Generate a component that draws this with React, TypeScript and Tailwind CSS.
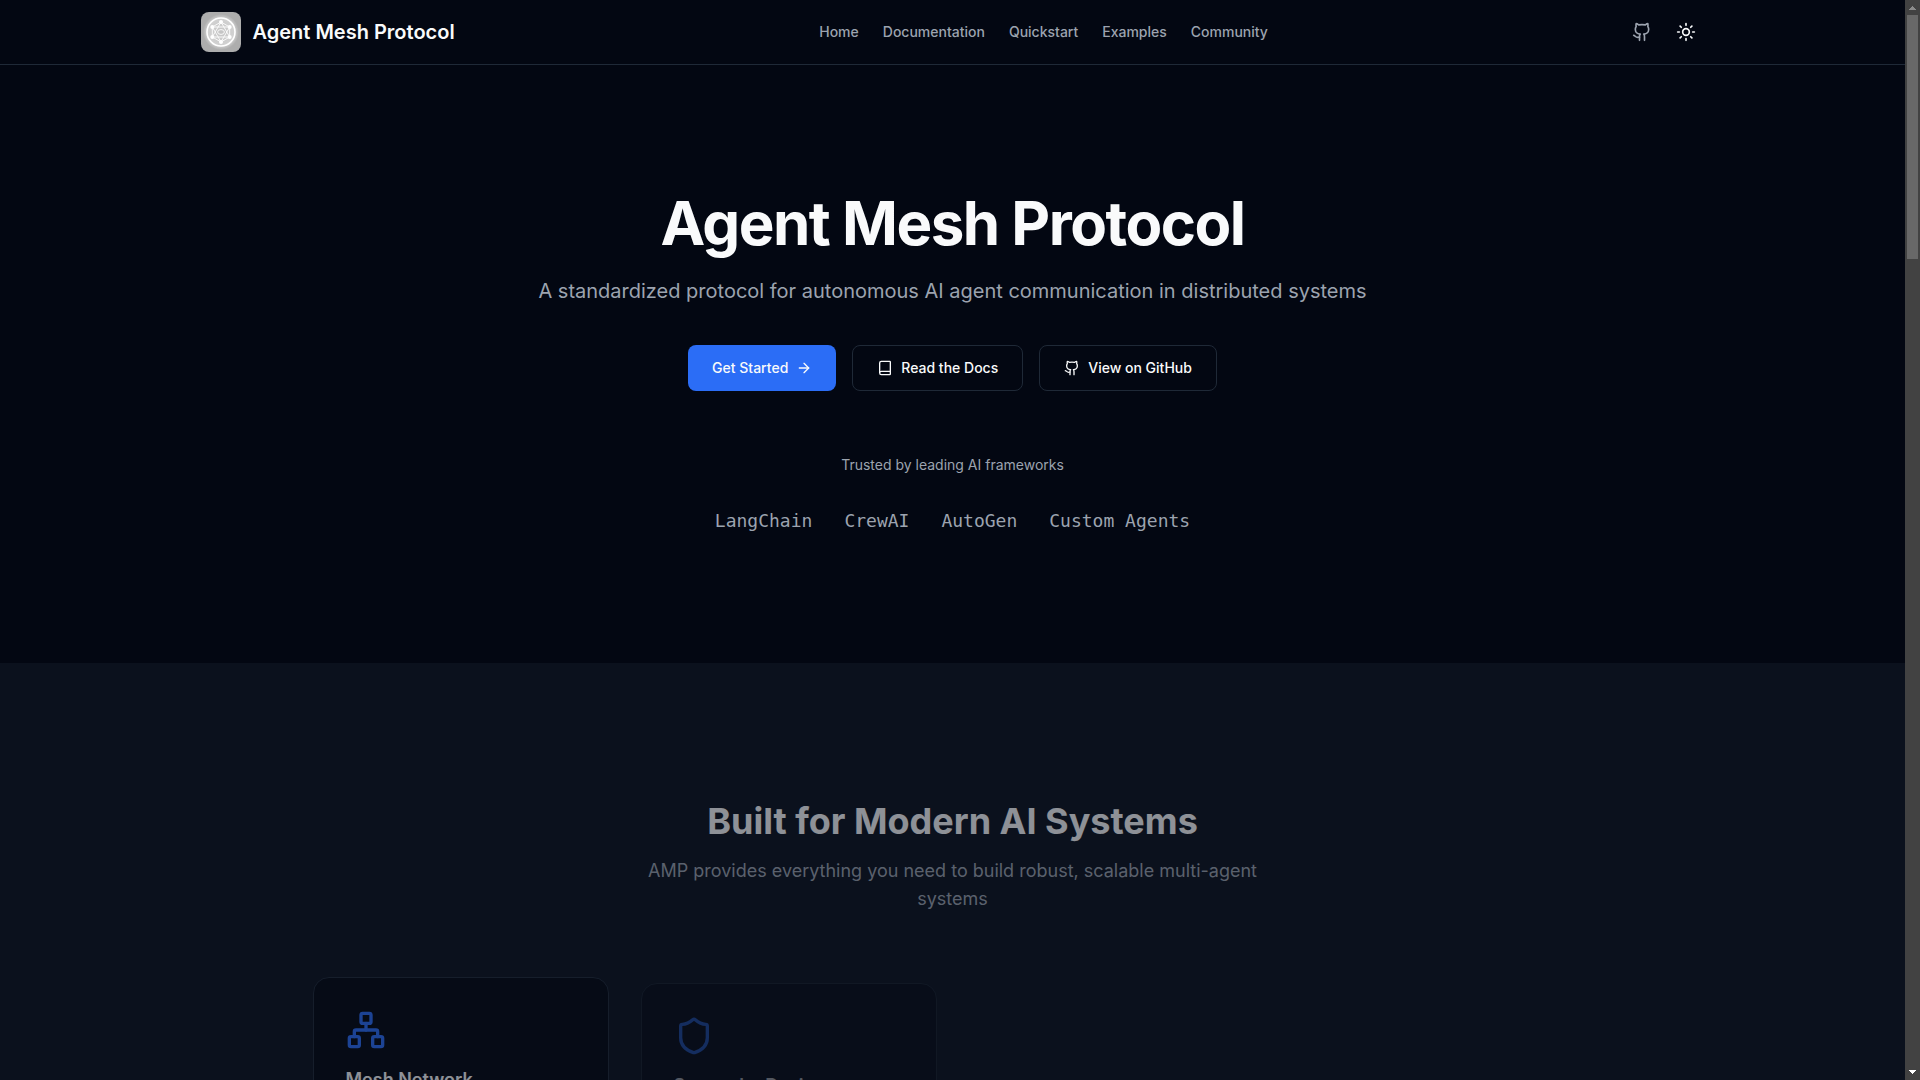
import { ArrowRight, Book, Github, Network, Shield, Sun } from "lucide-react";

const navLinks = ["Home", "Documentation", "Quickstart", "Examples", "Community"];

const frameworks = ["LangChain", "CrewAI", "AutoGen", "Custom Agents"];

const features = [
  {
    title: "Mesh Network",
    icon: Network,
    text: "Decentralized agent-to-agent communication with automatic routing",
    reveal: "translate-y-2.5 opacity-55",
  },
  {
    title: "Secure by Design",
    icon: Shield,
    text: "Built-in authentication and end-to-end encryption",
    reveal: "translate-y-4 opacity-30",
  },
];

const Logo = () => (
  <svg viewBox="0 0 40 40" className="h-10 w-10 rounded-lg" aria-hidden="true">
    <defs>
      <radialGradient id="glow">
        <stop offset="0%" stopColor="#c4c4c4" />
        <stop offset="75%" stopColor="#d2d2d2" />
        <stop offset="100%" stopColor="#adadad" />
      </radialGradient>
    </defs>
    <rect width="40" height="40" fill="#adadad" />
    <circle cx="20" cy="20" r="18" fill="url(#glow)" />
    <circle cx="20" cy="20" r="14" fill="none" stroke="#fff" strokeWidth="1.6" />
    <g fill="none" stroke="#fafafa" strokeWidth="1">
      <path d="M20 10 28.7 15 28.7 25 20 30 11.3 25 11.3 15Z" />
      <path d="M20 10 28.7 25 11.3 25Z" />
      <path d="M20 30 28.7 15 11.3 15Z" />
      <ellipse cx="20" cy="20" rx="3.4" ry="2.4" />
    </g>
    <g fill="#fff">
      <circle cx="20" cy="10" r="2" />
      <circle cx="28.7" cy="15" r="2" />
      <circle cx="28.7" cy="25" r="2" />
      <circle cx="20" cy="30" r="2" />
      <circle cx="11.3" cy="25" r="2" />
      <circle cx="11.3" cy="15" r="2" />
    </g>
  </svg>
);

const Header = () => (
  <header className="border-b border-[#1f2937]">
    <div className="mx-auto flex h-16 max-w-screen-2xl items-center justify-between px-4">
      <a href="#" className="flex items-center gap-3">
        <Logo />
        <span className="text-xl font-semibold">Agent Mesh Protocol</span>
      </a>
      <nav className="flex items-center gap-6 text-sm font-medium text-[#9ca3af]">
        {navLinks.map((link) => (
          <a key={link} href="#">
            {link}
          </a>
        ))}
      </nav>
      <div className="flex items-center gap-4">
        <a href="#" aria-label="GitHub" className="text-[#9ca3af]">
          <Github className="h-5 w-5" />
        </a>
        <button type="button" aria-label="Toggle theme" className="rounded-md p-2">
          <Sun className="h-5 w-5" />
        </button>
      </div>
    </div>
  </header>
);

const Hero = () => (
  <section className="flex flex-col items-center px-4 py-32 text-center">
    <h1 className="text-6xl font-bold tracking-tight">Agent Mesh Protocol</h1>
    <p className="mt-6 text-xl text-[#9ca3af]">
      A standardized protocol for autonomous AI agent communication in distributed systems
    </p>
    <div className="mt-10 flex flex-wrap justify-center gap-4 text-sm font-medium">
      <a href="#" className="flex items-center gap-2 rounded-lg bg-[#2b6df6] px-6 py-3">
        Get Started
        <ArrowRight className="h-4 w-4" />
      </a>
      <a href="#" className="flex items-center gap-2 rounded-lg border border-[#1f2937] px-6 py-3">
        <Book className="h-4 w-4" />
        Read the Docs
      </a>
      <a href="#" className="flex items-center gap-2 rounded-lg border border-[#1f2937] px-6 py-3">
        <Github className="h-4 w-4" />
        View on GitHub
      </a>
    </div>
    <p className="mt-16 text-sm text-[#9ca3af]">Trusted by leading AI frameworks</p>
    <div className="mt-8 flex flex-wrap justify-center gap-8 font-['DejaVu_Sans_Mono',monospace] text-lg text-[#9ca3af]">
      {frameworks.map((name) => (
        <span key={name}>{name}</span>
      ))}
    </div>
  </section>
);

const Features = () => (
  <section className="bg-[#0b111d] px-4 py-32">
    <div className="mx-auto max-w-7xl">
      <div className="mx-auto max-w-2xl translate-y-2.5 text-center opacity-55">
        <h2 className="text-4xl font-bold">Built for Modern AI Systems</h2>
        <p className="mt-4 text-lg text-[#9ca3af]">
          AMP provides everything you need to build robust, scalable multi-agent systems
        </p>
      </div>
      <div className="mt-16 grid grid-cols-4 gap-8">
        {features.map(({ title, icon: Icon, text, reveal }) => (
          <div
            key={title}
            className={`rounded-2xl border border-[#1f2937] bg-[#030712] p-8 ${reveal}`}
          >
            <Icon className="h-10 w-10 text-[#2b6df6]" />
            <h3 className="mt-4 text-lg font-semibold">{title}</h3>
            <p className="mt-2 text-sm text-[#9ca3af]">{text}</p>
          </div>
        ))}
      </div>
    </div>
  </section>
);

const Scrollbar = () => (
  <div className="flex w-[15px] shrink-0 flex-col items-center bg-[#424242]" aria-hidden="true">
    <svg viewBox="0 0 15 15" className="h-[15px] w-[15px]" shapeRendering="crispEdges">
      <path d="M4 10h7L7.5 6Z" fill="#8b8b8b" />
    </svg>
    <div className="h-[244px] w-[11px] bg-[#686868]" />
    <svg viewBox="0 0 15 15" className="mt-auto h-[15px] w-[15px]" shapeRendering="crispEdges">
      <path d="M4 5h7L7.5 9Z" fill="#fff" />
    </svg>
  </div>
);

export default function App() {
  return (
    <div className="flex h-screen overflow-hidden bg-[#030712] font-['Inter',sans-serif] text-[#f9fafb] antialiased">
      <main className="min-w-0 flex-1 overflow-hidden">
        <Header />
        <Hero />
        <Features />
      </main>
      <Scrollbar />
    </div>
  );
}
